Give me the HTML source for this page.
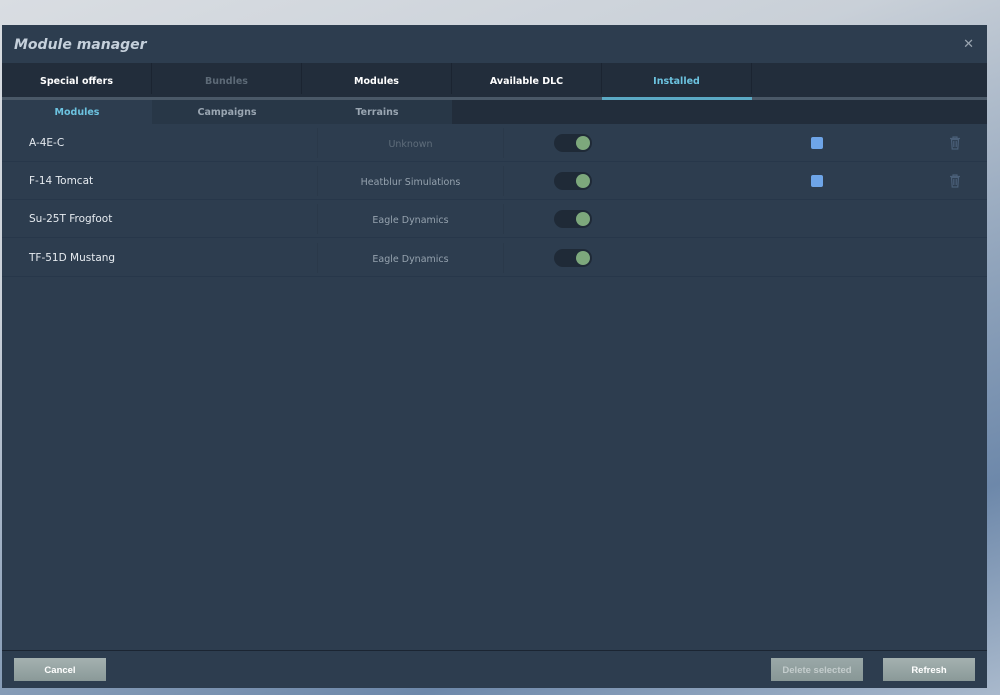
<!DOCTYPE html>
<html><head><meta charset="utf-8"><style>
*{margin:0;padding:0;box-sizing:border-box}
body{width:1000px;height:695px;overflow:hidden;position:relative;font-family:"DejaVu Sans","Liberation Sans",sans-serif;
background:linear-gradient(160deg,#d9dde2 0%,#c9d0d8 30%,#8fa3bb 60%,#6d88aa 80%,#a9b9cc 100%)}
.dlg{position:absolute;left:2px;top:25px;width:985px;height:663px;background:#2d3d4f}
.title{position:absolute;left:12px;top:12px;font-size:14px;font-style:italic;font-weight:bold;color:#c5d0db}
.close{position:absolute;right:13px;top:11px;color:#9aa5b0;font-size:13px;font-family:"Liberation Sans",sans-serif}
.tabs{position:absolute;left:0;top:38px;width:985px;height:34px;background:#222d3b}
.tab{position:absolute;top:3px;width:150px;height:31px;line-height:34px;text-align:center;font-size:9.5px;font-weight:bold;color:#fff;border-right:1px solid #1b2431;top:0;padding-top:3px;line-height:32px}
.strip{position:absolute;left:0;top:72px;width:985px;height:3px;background:#4a5867}
.sub{position:absolute;left:0;top:75px;width:985px;height:24px;background:#222d3b}
.st{position:absolute;top:0;width:150px;height:24px;line-height:26px;text-align:center;font-size:9.5px;font-weight:bold;color:#9aa6b2;background:#283747}
.row{position:absolute;left:0;width:985px;height:38px;border-bottom:1px solid #27374a;background:#2d3d4f}
.nm{position:absolute;left:27px;top:13px;font-size:10.5px;color:#e6ebf0}
.dev{position:absolute;left:315px;top:4px;width:187px;height:30px;border-left:1px solid #2a394a;border-right:1px solid #2a394a;text-align:center;line-height:33px;font-size:9.5px;color:#95a2ae}
.tg{position:absolute;left:552px;top:10px;width:38px;height:18px;border-radius:9px;background:#1f2a37}
.tg i{position:absolute;right:2px;top:2px;width:14px;height:14px;border-radius:50%;background:#7da87c}
.cb{position:absolute;left:809px;top:13px;width:12px;height:12px;border-radius:2px;background:#6ea5e8}
.tr{position:absolute;left:947px;top:12px}
.fl{position:absolute;left:0;top:625px;width:985px;height:1px;background:#1b2532}
.btn{position:absolute;top:633px;width:92px;height:23px;background:linear-gradient(#a4b1b0,#8a9998);color:#fff;font-size:9.5px;font-weight:bold;text-align:center;line-height:25px;font-family:"Liberation Sans Narrow","Liberation Sans",sans-serif}
</style></head><body>
<div class="dlg">
<div class="title">Module manager</div>
<div class="close">✕</div>
<div class="tabs">
<div class="tab" style="left:0">Special offers</div>
<div class="tab" style="left:150px;color:#5d6a77">Bundles</div>
<div class="tab" style="left:300px">Modules</div>
<div class="tab" style="left:450px">Available DLC</div>
<div class="tab" style="left:600px;color:#6cc3e0">Installed</div>
</div>
<div class="strip"><div style="position:absolute;left:600px;width:150px;height:3px;background:#5ba9c4"></div></div>
<div class="sub">
<div class="st" style="left:0;color:#6cc3e0;background:#2d3d4f">Modules</div>
<div class="st" style="left:150px">Campaigns</div>
<div class="st" style="left:300px">Terrains</div>
</div>
<div class="row" style="top:99px"><div class="nm">A-4E-C</div><div class="dev" style="color:#5f6d7b">Unknown</div><div class="tg"><i></i></div><div class="cb"></div>
<svg class="tr" width="12" height="14" viewBox="0 0 12 14"><path d="M1 2.5h10M4 2.5V1h4v1.5M2.5 3.5l.7 9.5h5.6l.7-9.5z M4.8 5v6M7.2 5v6" fill="none" stroke="#4a5f78" stroke-width="1.2"/></svg></div>
<div class="row" style="top:137px"><div class="nm">F-14 Tomcat</div><div class="dev">Heatblur Simulations</div><div class="tg"><i></i></div><div class="cb"></div>
<svg class="tr" width="12" height="14" viewBox="0 0 12 14"><path d="M1 2.5h10M4 2.5V1h4v1.5M2.5 3.5l.7 9.5h5.6l.7-9.5z M4.8 5v6M7.2 5v6" fill="none" stroke="#4a5f78" stroke-width="1.2"/></svg></div>
<div class="row" style="top:175px"><div class="nm">Su-25T Frogfoot</div><div class="dev">Eagle Dynamics</div><div class="tg"><i></i></div></div>
<div class="row" style="top:214px"><div class="nm">TF-51D Mustang</div><div class="dev">Eagle Dynamics</div><div class="tg"><i></i></div></div>
<div class="fl"></div>
<div class="btn" style="left:12px">Cancel</div>
<div class="btn" style="left:769px;color:#c3cccc;background:linear-gradient(#9aa8a8,#889796)">Delete selected</div>
<div class="btn" style="left:881px">Refresh</div>
</div>
</body></html>
